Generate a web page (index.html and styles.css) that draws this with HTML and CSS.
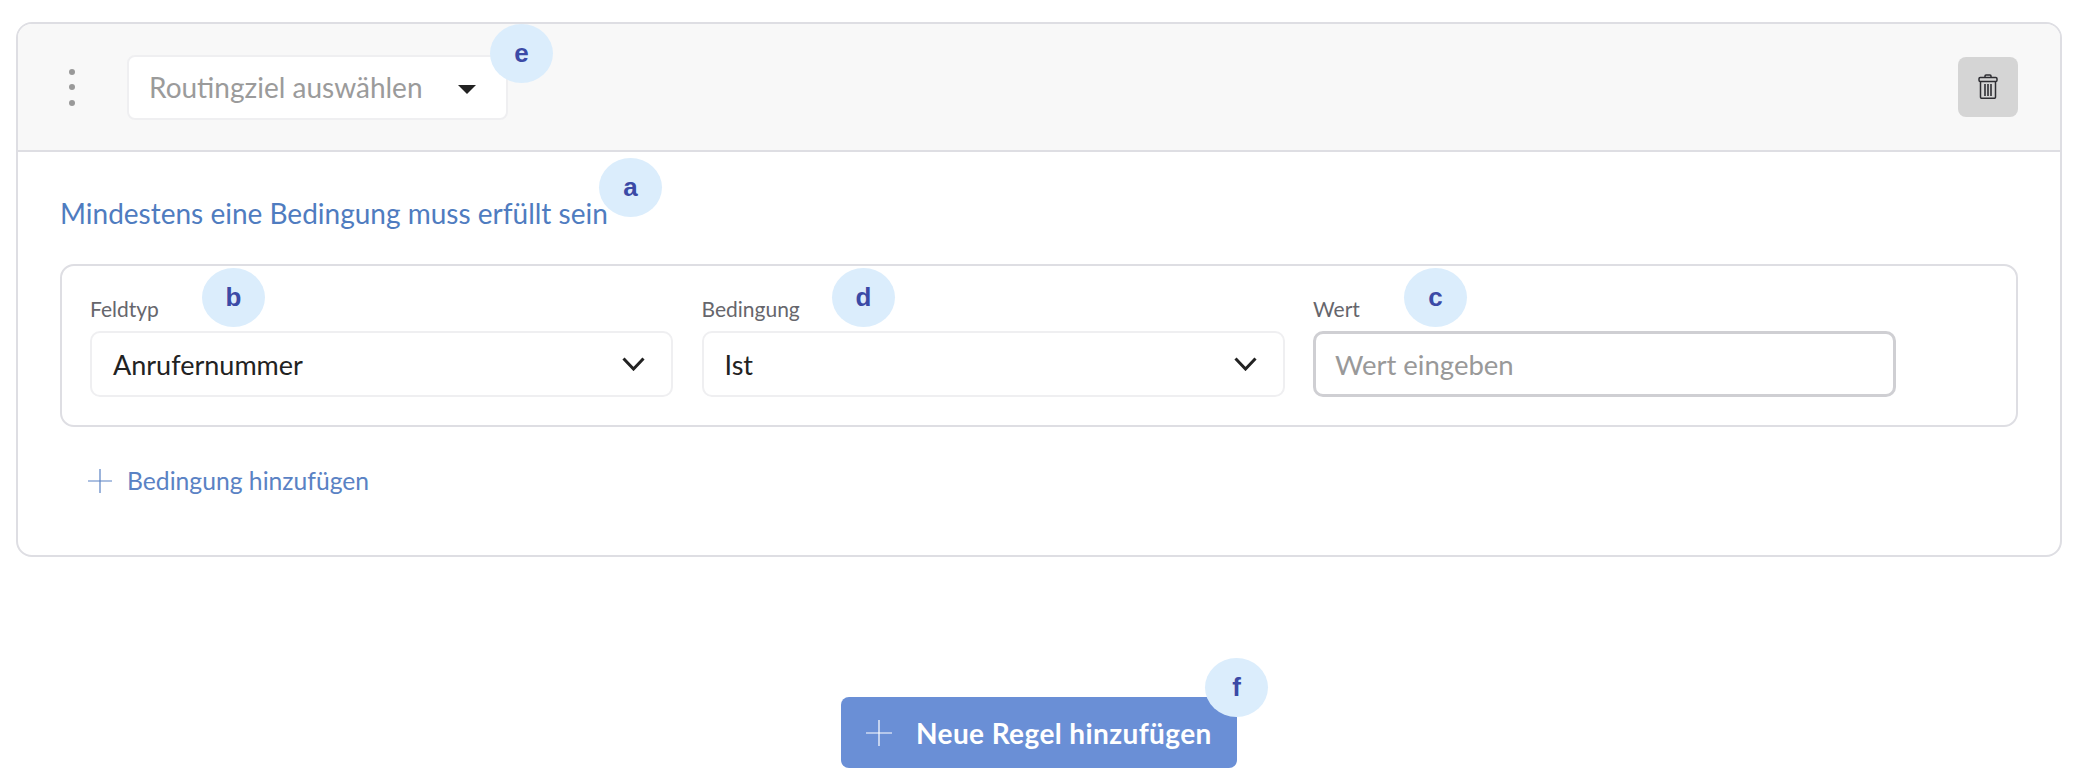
FILE: index.html
```html
<!DOCTYPE html>
<html lang="de">
<head>
  <meta charset="UTF-8" />
  <title>Routing-Regeln</title>
  <link rel="stylesheet" href="styles.css">
</head>
<body>
  <div class="page">
    <div class="rule-card">
      <div class="rule-header">
        <div class="drag-handle"><span></span><span></span><span></span></div>
        <div class="target-select">
          <span class="target-text">Routingziel auswählen</span>
          <span class="caret"></span>
        </div>
        <button class="delete-btn" type="button" aria-label="Löschen">
          <svg width="20" height="25" viewBox="0 0 20 25" fill="none" stroke="#2e2e33" stroke-width="1.5">
            <path d="M7 3.5V2q0-1 1-1h4q1 0 1 1v1.5" />
            <rect x="1" y="3.5" width="18" height="4" rx="1.2" />
            <path d="M2.5 7.5V23.3q0 .9.9.9h13.2q.9 0 .9-.9V7.5" />
            <path d="M7 10v12M10 10v12M13 10v12" stroke-width="1.6" />
          </svg>
        </button>
      </div>

      <div class="rule-body">
        <div class="rule-title">Mindestens eine Bedingung muss erfüllt sein</div>

        <div class="condition-box">
          <div class="condition-field">
            <label>Feldtyp</label>
            <div class="field-select">
              <span>Anrufernummer</span>
              <svg class="chevron" width="23" height="14" viewBox="0 0 23 14" fill="none" stroke="#222" stroke-width="3">
                <path d="M1.5 1.5 11.5 12l10-10.5" />
              </svg>
            </div>
          </div>
          <div class="condition-field">
            <label>Bedingung</label>
            <div class="field-select">
              <span>Ist</span>
              <svg class="chevron" width="23" height="14" viewBox="0 0 23 14" fill="none" stroke="#222" stroke-width="3">
                <path d="M1.5 1.5 11.5 12l10-10.5" />
              </svg>
            </div>
          </div>
          <div class="condition-field">
            <label>Wert</label>
            <div class="field-input">Wert eingeben</div>
          </div>
        </div>

        <div class="add-condition">
          <svg width="24" height="24" viewBox="0 0 24 24" stroke="#5a82c4" stroke-width="1.2">
            <path d="M12 0v24M0 12h24" />
          </svg>
          <span>Bedingung hinzufügen</span>
        </div>
      </div>
    </div>

    <div class="actions">
      <button class="add-rule-btn" type="button">
        <svg width="26" height="26" viewBox="0 0 26 26" stroke="#fff" stroke-width="1.2">
          <path d="M13 0v26M0 13h26" />
        </svg>
        <span>Neue Regel hinzufügen</span>
      </button>
    </div>

    <!-- Callout markers -->
    <div class="marker marker-e">e</div>
    <div class="marker marker-a">a</div>
    <div class="marker marker-b">b</div>
    <div class="marker marker-d">d</div>
    <div class="marker marker-c">c</div>
    <div class="marker marker-f">f</div>
  </div>
</body>
</html>
```

FILE: styles.css
```css
* {
  box-sizing: border-box;
}

body {
  margin: 0;
  background: #fff;
  font-family: Lato, "Open Sans", sans-serif;
  color: #222;
}

.page {
  position: relative;
  width: 2092px;
  height: 784px;
  padding: 22px 30px 0 16px;
  overflow: hidden;
}

/* Rule card */
.rule-card {
  height: 535px;
  border: 2px solid #dedee3;
  border-radius: 16px;
  overflow: hidden;
}

.rule-header {
  display: flex;
  align-items: center;
  height: 128px;
  padding: 0 42px 0 51px;
  background: #f8f8f8;
  border-bottom: 2px solid #dedee3;
}

.drag-handle {
  display: flex;
  flex-direction: column;
  gap: 9.5px;
  width: 6px;
  margin-right: 52px;
}
.drag-handle span {
  width: 6px;
  height: 6px;
  border-radius: 50%;
  background: #999;
}

.target-select {
  display: flex;
  align-items: center;
  justify-content: space-between;
  width: 381px;
  height: 65px;
  padding: 0 30px 0 20px;
  background: #fff;
  border: 2px solid #efeff1;
  border-radius: 8px;
}
.target-text {
  font-size: 28px;
  color: #9b9b9b;
}
.caret {
  width: 0;
  height: 0;
  margin-top: 4px;
  border-left: 9px solid transparent;
  border-right: 9px solid transparent;
  border-top: 9px solid #222;
}

.delete-btn {
  display: flex;
  align-items: center;
  justify-content: center;
  width: 60px;
  height: 60px;
  margin-left: auto;
  padding: 0 0 2px;
  background: #d5d5d5;
  border: 0;
  border-radius: 8px;
}

/* Conditions */
.rule-body {
  padding: 44px 42px 0;
}

.rule-title {
  font-size: 28px;
  line-height: 34px;
  color: #4f7cc0;
  margin-bottom: 34px;
}

.condition-box {
  display: grid;
  grid-template-columns: repeat(3, 583px);
  column-gap: 28.5px;
  height: 163px;
  padding: 29px 0 0 28px;
  border: 2px solid #dedee3;
  border-radius: 14px;
}

.condition-field label {
  display: block;
  font-size: 21px;
  line-height: 28px;
  color: #66666c;
  margin-bottom: 8px;
}

.field-select,
.field-input {
  display: flex;
  align-items: center;
  height: 66px;
  padding: 0 26px 0 21px;
  font-size: 27px;
  border-radius: 10px;
}
.field-select {
  justify-content: space-between;
  border: 2px solid #efeff1;
}
.field-input {
  padding-left: 19px;
  border: 3px solid #cfcfd3;
  color: #999;
  font-size: 27.5px;
}

.add-condition {
  display: flex;
  align-items: center;
  gap: 15px;
  margin: 39px 0 0 28px;
  font-size: 24.7px;
  color: #5a82c4;
}

/* Bottom button */
.actions {
  display: flex;
  justify-content: center;
  margin-top: 140px;
}

.add-rule-btn {
  display: flex;
  align-items: center;
  gap: 24px;
  width: 396px;
  height: 71px;
  padding: 0 0 0 25px;
  background: #6a8fd6;
  border: 0;
  border-radius: 8px;
  font-family: inherit;
  font-size: 28px;
  font-weight: 700;
  letter-spacing: 0.4px;
  color: #fff;
}

/* Callout markers sit on top of the form */
.marker {
  position: absolute;
  display: flex;
  align-items: center;
  justify-content: center;
  width: 63px;
  height: 59px;
  border-radius: 50%;
  background: #dbedfc;
  font-family: "Liberation Sans", Arial, sans-serif;
  font-size: 26px;
  font-weight: 700;
  color: #3b4aa6;
}
.marker-e { left: 490px; top: 24px; }
.marker-a { left: 599px; top: 158px; }
.marker-b { left: 202px; top: 268px; }
.marker-d { left: 832px; top: 268px; }
.marker-c { left: 1404px; top: 268px; }
.marker-f { left: 1205px; top: 658px; }
```
